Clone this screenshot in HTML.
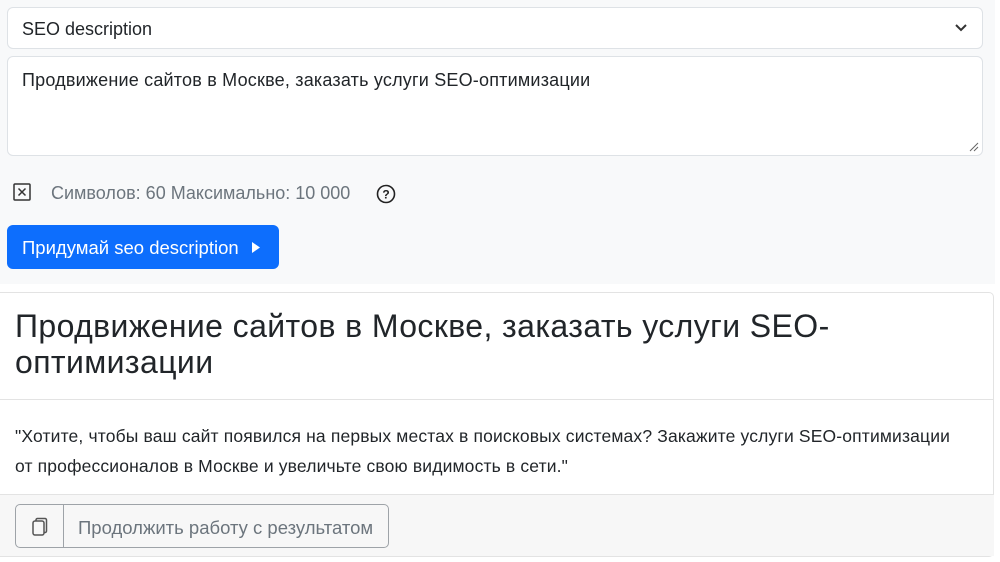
<!DOCTYPE html>
<html><head><meta charset="utf-8"><style>
*{box-sizing:border-box;margin:0;padding:0}
body{width:1000px;height:562px;overflow:hidden;background:#fff;font-family:"Liberation Sans",sans-serif;color:#212529;position:relative}
.top{position:absolute;left:0;top:0;width:995px;height:284px;background:#f8f9fa}
.sel{position:absolute;left:7px;top:7px;width:976px;height:42px;background:#fff;border:1px solid #dee2e6;border-radius:6px;font-size:18px;padding:11px 14px;line-height:20px}
.ta{position:absolute;left:7px;top:56px;width:976px;height:100px;background:#fff;border:1px solid #dee2e6;border-radius:6px;font-size:18px;padding:13px 14px;line-height:20px;letter-spacing:0.2px}
.cnt{position:absolute;left:51px;top:183px;font-size:18px;color:#6c757d}
.btn{position:absolute;left:7px;top:225px;width:272px;height:44px;background:#0d6efd;border-radius:6px;color:#fff;font-size:18.5px;padding:13px 15px;line-height:20px}
.card{position:absolute;left:0;top:292px;width:994px;height:265px;border:1px solid #e3e3e3;border-left:none;border-radius:0 5px 5px 0}
.h{position:absolute;left:15px;top:308px;font-size:32px;line-height:36px;width:900px;color:#212529;letter-spacing:0.4px}
.hl{position:absolute;left:0;top:399px;width:994px;height:1px;background:#e3e3e3}
.p{position:absolute;left:15px;top:421px;font-size:17.5px;line-height:30px;width:945px;letter-spacing:0.15px}
.ft{position:absolute;left:0;top:494px;width:994px;height:62px;background:#f7f7f7;border-top:1px solid #e3e3e3}
.b2{position:absolute;left:15px;top:504px;width:374px;height:44px;border:1px solid #9ea3a8;border-radius:5px}
.b2 .sep{position:absolute;left:47px;top:0;width:1px;height:42px;background:#9ea3a8}
.b2 span{position:absolute;left:62px;top:12px;font-size:18.5px;color:#6c757d;white-space:nowrap}
</style></head><body>
<div class="top"></div>
<div class="sel">SEO description
<svg style="position:absolute;right:14px;top:15px" width="14" height="10" viewBox="0 0 14 10"><path d="M2 2l5 5 5-5" stroke="#333" stroke-width="2" fill="none"/></svg></div>
<div class="ta">Продвижение сайтов в Москве, заказать услуги SEO-оптимизации
<svg style="position:absolute;right:3px;bottom:3px" width="10" height="10"><path d="M1 9L9 1M5 9L9 5" stroke="#666" stroke-width="1"/></svg></div>
<svg style="position:absolute;left:13px;top:183px" width="19" height="19"><rect x="1" y="1" width="16" height="16" rx="1" fill="none" stroke="#333" stroke-width="1.5"/><path d="M5.5 5.5l7 7M12.5 5.5l-7 7" stroke="#333" stroke-width="1.5"/></svg>
<div class="cnt">Символов: 60 Максимально: 10 000</div>
<svg style="position:absolute;left:376px;top:184px" width="20" height="20"><circle cx="10" cy="10" r="8.5" fill="none" stroke="#222" stroke-width="1.6"/><text x="10" y="14.5" font-size="12" font-weight="bold" text-anchor="middle" font-family="Liberation Sans" fill="#222">?</text></svg>
<div class="btn">Придумай seo description <svg style="position:absolute;left:244px;top:16px" width="10" height="13"><path d="M1 1l8 5.5-8 5.5z" fill="#fff"/></svg></div>
<div class="card"></div>
<div class="h">Продвижение сайтов в Москве, заказать услуги SEO-оптимизации</div>
<div class="hl"></div>
<div class="p">"Хотите, чтобы ваш сайт появился на первых местах в поисковых системах? Закажите услуги SEO-оптимизации от профессионалов в Москве и увеличьте свою видимость в сети."</div>
<div class="ft"></div>
<div class="b2"><svg style="position:absolute;left:15px;top:12px" width="18" height="20"><rect x="2" y="4" width="11" height="14" rx="2" fill="none" stroke="#555" stroke-width="1.5"/><path d="M5 4V3a1.5 1.5 0 0 1 1.5-1.5H14A1.5 1.5 0 0 1 15.5 3v11A1.5 1.5 0 0 1 14 15.5h-1" fill="none" stroke="#555" stroke-width="1.5"/></svg><div class="sep"></div><span>Продолжить работу с результатом</span></div>
</body></html>
